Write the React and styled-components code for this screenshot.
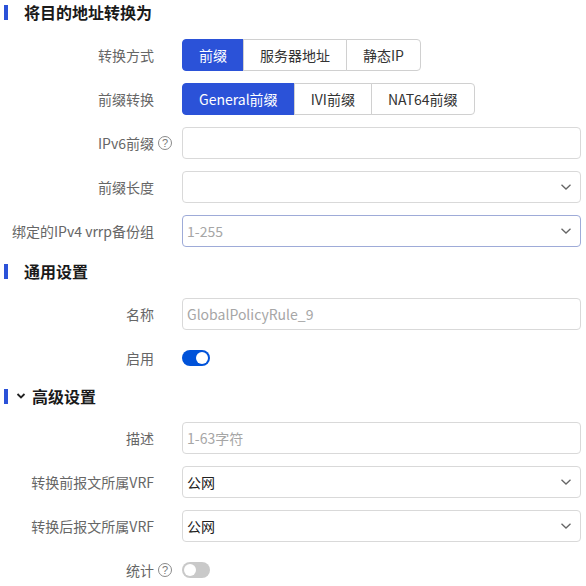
import React, { useState } from "react";
import styled, { createGlobalStyle } from "styled-components";

const Global = createGlobalStyle`
  html, body { margin: 0; padding: 0; background: #fff; }
  body { font-family: "Microsoft YaHei", "Noto Sans CJK SC", "Noto Sans", sans-serif; }
  * { box-sizing: border-box; }
`;

const Page = styled.div`
  width: 586px;
  padding: 0 5px 0 0;
  display: flex;
  flex-direction: column;
`;

const Header = styled.div`
  height: 24px;
  display: flex;
  align-items: center;
  margin: ${(p) => (p.$pull ? "-2px 0 14px" : "0 0 15px")};
  padding-left: 4px;
  font-size: 16px;
  font-weight: 700;
  color: #1a1a1a;
`;

const Bar = styled.span`
  width: 4px;
  height: 15px;
  background: #2b52d8;
  margin-right: ${(p) => (p.$tight ? "8px" : "16px")};
`;

const Caret = styled.svg`
  width: 10px;
  height: 8px;
  margin-right: 6px;
`;

const Row = styled.div`
  display: grid;
  grid-template-columns: 154px 28px 1fr;
  align-items: center;
  height: 32px;
  margin-bottom: 12px;
`;

const Label = styled.div`
  text-align: right;
  font-size: 14px;
  color: #666;
  white-space: nowrap;
`;

const Help = styled.span`
  justify-self: start;
  margin-left: 4px;
  width: 14px;
  height: 14px;
  border: 1px solid #8a8a8a;
  border-radius: 50%;
  color: #777;
  font-size: 11px;
  line-height: 12px;
  text-align: center;
  font-family: "Liberation Sans", Arial, sans-serif;
`;

const Segment = styled.div`
  display: flex;
`;

const SegBtn = styled.div`
  height: 32px;
  padding: 0 16px;
  display: flex;
  align-items: center;
  font-size: 14px;
  color: ${(p) => (p.$active ? "#fff" : "#333")};
  background: ${(p) => (p.$active ? "#2b52d8" : "#fff")};
  border: 1px solid ${(p) => (p.$active ? "#2b52d8" : "#d0d0d0")};
  margin-left: -1px;
  white-space: nowrap;
  &:first-child { margin-left: 0; border-radius: 4px 0 0 4px; }
  &:last-child { border-radius: 0 4px 4px 0; }
`;

const Field = styled.div`
  position: relative;
  height: 32px;
  border: 1px solid ${(p) => (p.$hover ? "#9eabd8" : "#d9d9d9")};
  border-radius: 4px;
  display: flex;
  align-items: center;
  padding: 0 4px;
  font-size: 14px;
  color: ${(p) => (p.$value ? "#222" : "#a6a6a6")};
  background: #fff;
`;

const FieldText = styled.span`
  flex: 1;
  white-space: nowrap;
`;

const Arrow = styled.svg`
  width: 12px;
  height: 8px;
  margin-right: 4px;
`;

const Toggle = styled.div`
  width: 28px;
  height: 16px;
  border-radius: 8px;
  background: ${(p) => (p.$on ? "#0052d9" : "#c9c9c9")};
  position: relative;
  &::after {
    content: "";
    position: absolute;
    top: 2px;
    left: ${(p) => (p.$on ? "14px" : "2px")};
    width: 12px;
    height: 12px;
    border-radius: 50%;
    background: #fff;
  }
`;

const ChevronDown = () => (
  <Arrow viewBox="0 0 12 8">
    <path d="M1.5 1.8 L6 6 L10.5 1.8" fill="none" stroke="#666" strokeWidth="1.3" />
  </Arrow>
);

function FormRow({ label, help, children }) {
  return (
    <Row>
      <Label>{label}</Label>
      {help ? <Help>?</Help> : <span />}
      <div>{children}</div>
    </Row>
  );
}

function Select({ text, value, hover }) {
  return (
    <Field $value={value} $hover={hover}>
      <FieldText>{text}</FieldText>
      <ChevronDown />
    </Field>
  );
}

export default function App() {
  const [mode] = useState(0);
  const [prefix] = useState(0);
  return (
    <>
      <Global />
      <Page>
        <Header>
          <Bar />
          将目的地址转换为
        </Header>
        <FormRow label="转换方式">
          <Segment>
            {["前缀", "服务器地址", "静态IP"].map((t, i) => (
              <SegBtn key={t} $active={i === mode}>{t}</SegBtn>
            ))}
          </Segment>
        </FormRow>
        <FormRow label="前缀转换">
          <Segment>
            {["General前缀", "IVI前缀", "NAT64前缀"].map((t, i) => (
              <SegBtn key={t} $active={i === prefix}>{t}</SegBtn>
            ))}
          </Segment>
        </FormRow>
        <FormRow label="IPv6前缀" help>
          <Field />
        </FormRow>
        <FormRow label="前缀长度">
          <Select text="" />
        </FormRow>
        <FormRow label="绑定的IPv4 vrrp备份组">
          <Select text="1-255" hover />
        </FormRow>

        <Header>
          <Bar />
          通用设置
        </Header>
        <FormRow label="名称">
          <Field><FieldText>GlobalPolicyRule_9</FieldText></Field>
        </FormRow>
        <FormRow label="启用">
          <Toggle $on />
        </FormRow>

        <Header $pull>
          <Bar $tight />
          <Caret viewBox="0 0 10 8">
            <path d="M1.5 2 L5 5.5 L8.5 2" fill="none" stroke="#222" strokeWidth="1.8" />
          </Caret>
          高级设置
        </Header>
        <FormRow label="描述">
          <Field><FieldText>1-63字符</FieldText></Field>
        </FormRow>
        <FormRow label="转换前报文所属VRF">
          <Select text="公网" value />
        </FormRow>
        <FormRow label="转换后报文所属VRF">
          <Select text="公网" value />
        </FormRow>
        <FormRow label="统计" help>
          <Toggle />
        </FormRow>
      </Page>
    </>
  );
}
